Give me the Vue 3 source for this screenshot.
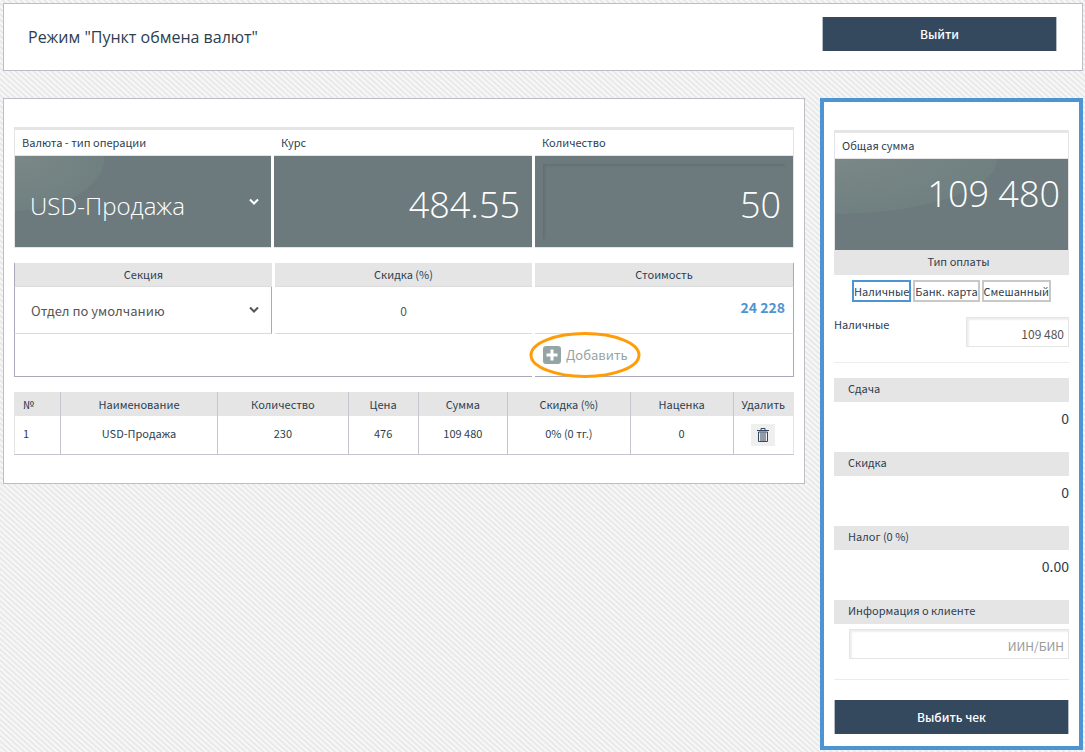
<script setup>
import { ref } from 'vue'

const operation = ref('USD-Продажа')
const rate = ref('484.55')
const quantity = ref('50')
const section = ref('Отдел по умолчанию')
const discount = ref('0')
const cash = ref('109 480')
const clientId = ref('')
const payment = ref('Наличные')
const payments = ['Наличные', 'Банк. карта', 'Смешанный']
const totals = [
  { label: 'Сдача', value: '0' },
  { label: 'Скидка', value: '0' },
  { label: 'Налог (0 %)', value: '0.00' }
]
const columns = [
  { key: 'num', label: '№' },
  { key: 'name', label: 'Наименование' },
  { key: 'qty', label: 'Количество' },
  { key: 'price', label: 'Цена' },
  { key: 'sum', label: 'Сумма' },
  { key: 'disc', label: 'Скидка (%)' },
  { key: 'markup', label: 'Наценка' }
]
const rows = [
  { num: '1', name: 'USD-Продажа', qty: '230', price: '476', sum: '109 480', disc: '0% (0 тг.)', markup: '0' }
]
</script>

<template>
  <div class="page">
    <header class="top">
      <h1>Режим "Пункт обмена валют"</h1>
      <button class="primary exit" type="button">Выйти</button>
    </header>

    <div class="columns">
      <main class="panel">
        <div class="fields">
          <div class="field">
            <label for="operation">Валюта - тип операции</label>
            <div class="dark glossy pick">
              <select id="operation" v-model="operation">
                <option>USD-Продажа</option>
              </select>
              <svg class="chevron" viewBox="0 0 10 8" aria-hidden="true"><path d="M1 1.5 5 5.5 9 1.5" /></svg>
            </div>
          </div>
          <div class="field">
            <label for="rate">Курс</label>
            <div class="dark"><input id="rate" v-model="rate" class="plain" type="text"></div>
          </div>
          <div class="field">
            <label for="quantity">Количество</label>
            <div class="dark"><input id="quantity" v-model="quantity" class="inset" type="text"></div>
          </div>
        </div>

        <div class="details">
          <label class="head first" for="section">Секция</label>
          <label class="head" for="discount">Скидка (%)</label>
          <div class="head last">Стоимость</div>
          <div class="cell first pick divided">
            <select id="section" v-model="section">
              <option>Отдел по умолчанию</option>
            </select>
            <svg class="chevron" viewBox="0 0 10 8" aria-hidden="true"><path d="M1 1.5 5 5.5 9 1.5" /></svg>
          </div>
          <div class="cell"><input id="discount" v-model="discount" type="text"></div>
          <div class="cell last cost">24 228</div>
          <div class="foot first wide"></div>
          <div class="foot last">
            <button class="add" type="button">
              <svg viewBox="0 0 18 18" aria-hidden="true">
                <rect width="18" height="18" rx="3" fill="#95a5a6" />
                <path d="M9 3.5v11M3.5 9h11" stroke="#fff" stroke-width="3" />
              </svg>
              Добавить
            </button>
            <svg class="ring" viewBox="0 0 112 46" aria-hidden="true">
              <ellipse cx="56" cy="23" rx="54" ry="21.5" />
            </svg>
          </div>
        </div>

        <table class="items">
          <colgroup>
            <col v-for="c in columns" :key="c.key" :class="c.key + '-col'">
            <col>
          </colgroup>
          <thead>
            <tr>
              <th v-for="c in columns" :key="c.key" :class="c.key">{{ c.label }}</th>
              <th>Удалить</th>
            </tr>
          </thead>
          <tbody>
            <tr v-for="row in rows" :key="row.num">
              <td v-for="c in columns" :key="c.key" :class="c.key">{{ row[c.key] }}</td>
              <td class="del">
                <button class="trash" type="button" aria-label="Удалить">
                  <svg viewBox="0 0 12 14" aria-hidden="true">
                    <path d="M0 2.5h12M4 2V.5h4V2M1.5 4v9.5h9V4zM4 4.5v8.5M6 4.5v8.5M8 4.5v8.5" />
                  </svg>
                </button>
              </td>
            </tr>
          </tbody>
        </table>
      </main>

      <aside class="side">
        <div class="field sum">
          <div class="caption">Общая сумма</div>
          <div class="dark glossy total">109 480</div>
        </div>
        <div class="paytype">Тип оплаты</div>
        <div class="pays">
          <button v-for="p in payments" :key="p" type="button" :class="{ active: p === payment }" @click="payment = p">{{ p }}</button>
        </div>
        <div class="cash">
          <label for="cash">Наличные</label>
          <input id="cash" v-model="cash" class="box" type="text">
        </div>
        <section v-for="t in totals" :key="t.label" class="line">
          <h2>{{ t.label }}</h2>
          <p>{{ t.value }}</p>
        </section>
        <section class="client">
          <h2><label for="client">Информация о клиенте</label></h2>
          <input id="client" v-model="clientId" class="box" type="text" placeholder="ИИН/БИН">
        </section>
        <button class="primary" type="button">Выбить чек</button>
      </aside>
    </div>
  </div>
</template>

<style>
body {
  margin: 0;
  background: repeating-linear-gradient(42deg, #e6e6e6 0, #ececec 1px, #f8f8f8 2px, #f6f6f6 3px, #e6e6e6 4px);
}
</style>

<style scoped>
* { box-sizing: border-box; }
.page {
  padding: 3px 2px 2px 3px;
  color: #2c3e50;
  font: 11px/24px "Noto Sans CJK SC", "Noto Sans", sans-serif;
}
button, input, select { font: inherit; color: inherit; margin: 0; padding: 0; border: 0; background: none; border-radius: 0; }
input, select { width: 100%; min-width: 0; outline: none; }
select { appearance: none; }
button { cursor: pointer; }
.top {
  display: flex;
  align-items: flex-start;
  justify-content: space-between;
  height: 68px;
  padding: 13px 25px 13px 24px;
  background: #fff;
  border: 1px solid #bdbcc9;
}
h1 { margin: 0; font: 400 16px/40px "Open Sans", sans-serif; }
.primary {
  width: 100%;
  height: 34px;
  background: #34495e;
  border: solid #b4bcc4;
  border-width: 0 1px;
  color: #fff;
  font-size: 12px;
  font-weight: 500;
  line-height: 34px;
}
.exit { width: 235px; }
.columns { display: grid; grid-template-columns: minmax(0, 1fr) 263px; gap: 15px; align-items: start; margin-top: 27px; }
.panel { padding: 28px 10px; background: #fff; border: 1px solid #bdbcc9; }
.fields { display: grid; grid-template-columns: 256fr 258fr 258fr; column-gap: 3px; border: 1px solid #e5e5e5; border-top-width: 3px; border-bottom: 0; }
.field { min-width: 0; }
.field label, .caption { display: block; height: 26px; padding: 0 7px; line-height: 24px; border-bottom: 1px solid #e5e5e5; }
.dark {
  display: flex;
  height: 92px;
  padding: 8px;
  background: #6c7a7d;
  border-bottom: 1px solid #e5e5e5;
  color: #fff;
  font: 300 36px/84px "Open Sans", sans-serif;
}
.dark input { padding: 6px 4px 0; text-align: right; }
.dark .inset { box-shadow: inset 2px 2px 2px rgba(0, 0, 0, .08); }
.glossy { background: radial-gradient(ellipse 90px 55px at 0 0, #7a8987 0, #707f80 99%, #6c7a7d 100%); }
.pick { position: relative; }
.dark select { padding: 0 7px 12px; font-size: 24px; }
.chevron { position: absolute; right: 12px; top: 50%; width: 10px; height: 8px; margin-top: -4px; pointer-events: none; fill: none; stroke: currentColor; stroke-width: 2; }
.details { display: grid; grid-template-columns: 258fr 257fr 259fr; column-gap: 3px; margin-top: 15px; }
.head { height: 24px; background: #e5e5e5; border-bottom: 1px solid #dcdcdc; text-align: center; line-height: 22px; }
.cell { display: flex; height: 47px; border-bottom: 1px solid #dcdcdc; color: #555; font-size: 13px; }
.cell select { padding: 2px 16px 0; }
.cell input { padding-top: 2px; font-size: 12px; text-align: center; }
.first { border-left: 1px solid #a9a9bb; }
.last { border-right: 1px solid #a9a9bb; }
.divided { border-right: 1px solid #a9a9bb; }
.cost { justify-content: flex-end; padding: 8px; color: #4d94d2; font-size: 14px; font-weight: 700; }
.foot { position: relative; height: 43px; border-bottom: 1px solid #a9a9bb; }
.wide { grid-column: span 2; }
.add { display: flex; align-items: center; gap: 5px; height: 42px; padding-left: 8px; color: #95a5a6; font-size: 13px; }
.add svg { width: 18px; height: 18px; }
.ring { position: absolute; left: -6px; top: -2px; width: 112px; height: 46px; pointer-events: none; fill: none; stroke: #ff9c0a; stroke-width: 3; }
.items { width: 100%; margin-top: 15px; table-layout: fixed; border-collapse: separate; border-spacing: 0; border: 1px solid #e5e5e5; border-top: 0; border-bottom: 1px solid #c5c5d0; }
.items th { height: 24px; padding: 0; background: #e5e5e5; font-weight: 400; text-align: center; }
.items td { height: 38px; padding: 0 0 4px; text-align: center; }
.items .del { padding: 0; }
.items th + th, .items td + td { border-left: 1px solid #c5c5d0; }
.items .num { padding-left: 8px; text-align: left; }
.num-col { width: 5.75%; }
.name-col { width: 20.25%; }
.qty-col { width: 16.75%; }
.price-col { width: 9%; }
.sum-col { width: 11.5%; }
.disc-col { width: 15.75%; }
.markup-col { width: 13.25%; }
.trash { display: block; width: 24px; height: 22px; margin: 0 auto; background: #efefef; }
.trash svg { display: block; width: 12px; height: 14px; margin: 0 auto; fill: none; stroke: #34495e; }
.side { padding: 28px 10px 12px; background: #fff; border: 4px solid #4d94d2; }
.field.sum { border: 1px solid #e5e5e5; border-top-width: 3px; border-bottom: 0; }
.total { justify-content: flex-end; line-height: 54px; background: radial-gradient(ellipse 163px 55px at 0 0, #7a8987 0, #707f80 99%, #6c7a7d 100%); }
.paytype { height: 24px; padding-left: 14px; background: #e5e5e5; line-height: 20px; text-align: center; }
.pays { display: flex; justify-content: center; gap: 2px; padding-top: 5px; }
.pays button { height: 22px; padding: 0; border: 2px solid #c8c8c8; line-height: 16px; white-space: nowrap; }
.pays .active { border-color: #4d94d2; }
.cash { display: flex; justify-content: space-between; align-items: flex-start; padding: 15px 0; margin-bottom: 15px; border-bottom: 1px solid #ececec; line-height: 14px; }
.box { height: 30px; padding: 2px 4px 0; border: 1px solid #e5e5e5; box-shadow: inset 2px 2px 2px #eee; color: #555; font-size: 12px; text-align: right; }
.box::placeholder { color: #999; opacity: 1; }
.cash .box { width: 103px; }
h2 { margin: 0; height: 24px; padding-left: 14px; background: #e5e5e5; font-size: 11px; font-weight: 400; line-height: 20px; }
.line p { height: 50px; margin: 0; font-size: 14px; line-height: 32px; text-align: right; }
.client { display: flex; flex-direction: column; padding-bottom: 20px; margin-bottom: 20px; border-bottom: 1px solid #ececec; }
.client .box { width: auto; margin: 5px 0 0 15px; }
</style>
